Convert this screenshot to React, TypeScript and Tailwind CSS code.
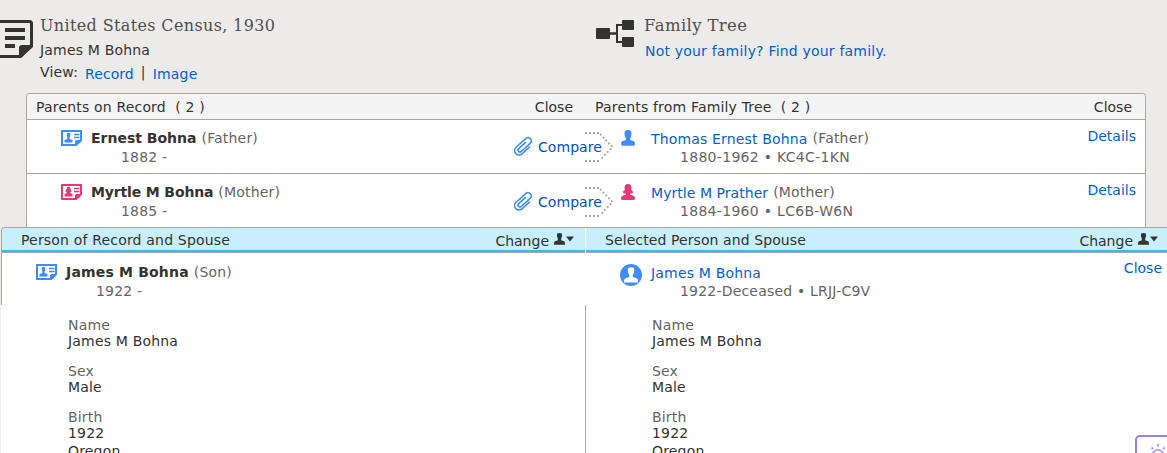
import React from "react";

function RecordIcon({ female = false }: { female?: boolean }) {
  const color = female ? "#e23a79" : "#3f8cf8";
  return (
    <svg className="block h-4 w-[21px] shrink-0" viewBox="0 0 21 16">
      <path d="M1 1H20V10L15 15H1Z" fill="#fff" stroke={color} strokeWidth="2" />
      <path d="M21 9.500V10.500L15.500 16H14V11.500Q14 10 15.500 10H20Z" fill={color} />
      <path d="M13 4.500h5.500M13 7.500h5.500" stroke={color} strokeWidth="1.300" />
      <path
        d={
          female
            ? "M6 3.200Q7.500 2.200 9 3.200L9.800 6 10.800 7.500 9.200 8.500V9L11.500 10V12.500H3.500V10L5.800 9V8.500L4.200 7.500 5.200 6Z"
            : "M5.800 3.200Q7.500 2.400 9.200 3.200V6L8.600 7.500V9L11.500 10V12.500H3.500V10L6.400 9V7.500L5.800 6Z"
        }
        fill={color}
      />
    </svg>
  );
}

function PersonIcon({ female = false }: { female?: boolean }) {
  return female ? (
    <svg className="block h-4 w-[14px] shrink-0" viewBox="0 0 14 16" fill="#e23a79">
      <path d="M4 1Q7-1 10 1L10.500 4 10.300 6 12.500 8 11 9.500H9V10.500L13 12Q14 12.500 14 14.500Q14 16 12 16H2Q0 16 0 14.500Q0 12.500 1 12L5 10.500V9.500H3L1.500 8 3.700 6 3.500 4Z" />
    </svg>
  ) : (
    <svg className="block h-4 w-[14px] shrink-0" viewBox="0 0 14 16" fill="#3f8cf8">
      <path d="M3.800 1Q7-.8 10.200 1L10.500 4 10 6.500 9.200 8.500V10L13 11.200Q14 11.700 14 14Q14 15.700 12.500 15.700H1.500Q0 15.700 0 14Q0 11.700 1 11.200L4.800 10V8.500L4 6.500 3.500 4Z" />
    </svg>
  );
}

function Avatar() {
  return (
    <svg className="block size-[22px] shrink-0" viewBox="0 0 22 22">
      <circle cx="11" cy="11" r="11" fill="#3f8cf8" />
      <path d="M8 4Q11 2.500 14 4L14.300 7 13.800 9 12.800 11V13L17 14.500Q18.300 15.500 18 18.500H4Q3.700 15.500 5 14.500L9.200 13V11L8.200 9 7.700 7Z" fill="#fff" />
    </svg>
  );
}

function Change() {
  return (
    <div className="flex pt-[5px] tracking-normal">
      <span>Change</span>
      <svg className="ml-[5px] block h-3 w-5" viewBox="0 0 20 12" fill="#333331">
        <path d="M3 .7Q5.500-.5 8 .7V3.500L7.200 5.500V7.300L10.500 8.500Q11 9 11 11.800H0Q0 9 .5 8.500L3.800 7.300V5.500L3 3.500Z" />
        <path d="M12 3.500H20L16 8.500Z" />
      </svg>
    </div>
  );
}

function Clip() {
  return (
    <svg className="block h-5 w-[21px]" viewBox="0 0 21 20" fill="none" stroke="#3f8cf8" strokeWidth="1.600" strokeLinecap="round">
      <path
        transform="translate(10.200 10.200) rotate(-42)"
        d="M4 4.800H-6A4.400 4.400 0 0 1 -6 -4H7A3.300 3.300 0 0 1 7 2.600H-5A1.900 1.900 0 0 1 -5 -1.200H4"
      />
    </svg>
  );
}

function Compare({ className }: { className: string }) {
  return (
    <div className={"absolute right-[-29px] flex w-[101px] tracking-[0.06px] text-[#0050c8] " + className}>
      <div className="mt-[6px]">
        <Clip />
      </div>
      <span className="relative z-10 ml-1 mt-[9px]">Compare</span>
      <svg className="absolute right-0 top-[2px] h-[30px] w-[30px]" viewBox="0 0 30 30" fill="none" stroke="#aaa69e" strokeWidth="1.800" strokeDasharray="2 2">
        <path d="M1 1H15" />
        <path d="M1 29H15" />
        <path d="M16 2L28.500 15L16 28" />
      </svg>
    </div>
  );
}

interface ParentProps {
  name: string;
  nameClass: string;
  role: string;
  year: string;
  treeName: string;
  treeNameClass: string;
  treeLife: string;
  compareClass: string;
  female?: boolean;
}

function ParentRow({ name, nameClass, role, year, treeName, treeNameClass, treeLife, compareClass, female }: ParentProps) {
  return (
    <div className="flex h-[54px] border-b border-[#aaa69e]">
      <div className="relative flex w-[558px] pl-[34px] pt-[10px]">
        <RecordIcon female={female} />
        <div className="ml-[9px]">
          <div className="flex">
            <b className={nameClass}>{name}</b>
            <span className="ml-[5px] text-[#656462]">({role})</span>
          </div>
          <div className="ml-[30px] mt-[3px] text-[#656462]">{year}</div>
        </div>
        <Compare className={compareClass} />
      </div>
      <div className="flex flex-1 pl-9 pr-[9px] pt-[10px]">
        <PersonIcon female={female} />
        <div className="ml-4 pt-px">
          <div className="flex">
            <span className={"text-[#005fd6] " + treeNameClass}>{treeName}</span>
            <span className="-mt-px ml-[5px] text-[#656462]">({role})</span>
          </div>
          <div className="ml-[29px] mt-[2px] tracking-[0.3px] text-[#656462]">{treeLife}</div>
        </div>
        <a className="-mt-[2px] ml-auto tracking-normal text-[#005fd6]">Details</a>
      </div>
    </div>
  );
}

function Facts() {
  const facts = [
    { label: "Name", lines: ["James M Bohna"] },
    { label: "Sex", lines: ["Male"] },
    { label: "Birth", lines: ["1922", "Oregon"] },
  ];
  return (
    <div className="flex flex-col gap-[14px] pt-3">
      {facts.map((f) => (
        <div key={f.label}>
          <div className="text-[#656462]">{f.label}</div>
          {f.lines.map((l, i) => (
            <div key={l} className={i ? "mt-[2px]" : ""}>
              {l}
            </div>
          ))}
        </div>
      ))}
    </div>
  );
}

export default function App() {
  return (
    <div className="relative flex h-[453px] w-[1167px] flex-col overflow-hidden whitespace-nowrap bg-[#ecebe9] font-['DejaVu_Sans',sans-serif] text-[14px] leading-[16px] tracking-[0.18px] text-[#333331]">
      <header className="flex h-[93px] shrink-0">
        <div className="flex w-[596px] pt-[15px]">
          <svg className="mt-[5px] block h-[38px] w-[33px]" viewBox="0 0 33 38" fill="#333331">
            <path d="M-4 1.500H29.500Q31.500 1.500 31.500 3.500V25L20.500 36.500H-4" fill="none" stroke="#333331" strokeWidth="3" />
            <path d="M19 37V28Q19 25 22 25H33V27L22 37ZM5 8H25V12H5ZM5 16H25V20H5ZM5 24H15V28H5Z" />
          </svg>
          <div className="ml-[7px]">
            <h1 className="h-[22px] font-['DejaVu_Serif',serif] text-[16px] leading-[22px] tracking-[0.36px] text-[#514f4b]">United States Census, 1930</h1>
            <div className="mt-[5px]">James M Bohna</div>
            <div className="mt-[6px] flex">
              <span>View:</span>
              <a className="ml-[7px] mt-[2px] tracking-[0.06px] text-[#005fd6]">Record</a>
              <span className="ml-[7px]">|</span>
              <a className="ml-[7px] mt-[2px] text-[#005fd6]">Image</a>
            </div>
          </div>
        </div>
        <div className="flex pt-[15px]">
          <svg className="mt-[5px] block h-[28px] w-[38px]" viewBox="0 0 38 28" fill="#333331">
            <rect y="8" width="14" height="11" rx="1" />
            <rect x="26" width="12" height="10" rx="1" />
            <rect x="26" y="17" width="12" height="10" rx="1" />
            <path d="M13 13.500H21" fill="none" stroke="#333331" strokeWidth="2.500" />
            <path d="M26 5H21V22H26" fill="none" stroke="#333331" strokeWidth="2" />
          </svg>
          <div className="ml-[10px]">
            <h1 className="h-[22px] font-['DejaVu_Serif',serif] text-[16.500px] leading-[22px] tracking-[0.36px] text-[#514f4b]">Family Tree</h1>
            <a className="ml-px mt-[6px] block tracking-[0.2px] text-[#005fd6]">Not your family? Find your family.</a>
          </div>
        </div>
      </header>

      <section className="ml-[26px] h-[134px] w-[1120px] shrink-0 overflow-hidden rounded-t-[4px] border-x border-t border-[#aaa69e] bg-white">
        <div className="flex h-[26px] border-b border-[#aaa69e] bg-[#f4f4f4] pt-[5px]">
          <div className="flex w-[558px] justify-between pl-[9px] pr-3">
            <span className="whitespace-pre">Parents on Record  ( 2 )</span>
            <span className="tracking-normal">Close</span>
          </div>
          <div className="flex flex-1 justify-between pl-[10px] pr-[13px]">
            <span className="whitespace-pre">Parents from Family Tree  ( 2 )</span>
            <span className="tracking-normal">Close</span>
          </div>
        </div>
        <ParentRow
          name="Ernest Bohna"
          nameClass="tracking-normal"
          role="Father"
          year="1882 -"
          treeName="Thomas Ernest Bohna"
          treeNameClass="tracking-[0.16px]"
          treeLife="1880-1962 • KC4C-1KN"
          compareClass="top-[10px]"
        />
        <ParentRow
          name="Myrtle M Bohna"
          nameClass="tracking-[-0.14px]"
          role="Mother"
          year="1885 -"
          treeName="Myrtle M Prather"
          treeNameClass="tracking-[0.05px]"
          treeLife="1884-1960 • LC6B-W6N"
          compareClass="top-[11px]"
          female
        />
      </section>

      <section className="flex h-[78px] shrink-0 pl-px">
        <div className="w-[584px] rounded-tl-[4px] border-l border-t border-[#aaa69e] bg-white">
          <div className="flex h-[25px] justify-between rounded-tl-[3px] border-b border-[#aaa69e] bg-[#c9effd] pl-[19px] pr-[11px] shadow-[inset_0_-2px_0_#2bc3ee]">
            <span className="pt-1">Person of Record and Spouse</span>
            <Change />
          </div>
          <div className="flex pl-[34px] pt-[11px]">
            <RecordIcon />
            <div className="ml-[9px]">
              <div className="flex">
                <b>James M Bohna</b>
                <span className="ml-[5px] text-[#656462]">(Son)</span>
              </div>
              <div className="ml-[30px] mt-[3px] text-[#656462]">1922 -</div>
            </div>
          </div>
        </div>
        <div className="flex-1 border-t border-[#aaa69e] bg-white">
          <div className="ml-px flex h-[25px] justify-between border-b border-[#aaa69e] bg-[#c9effd] pl-[19px] pr-[9px] shadow-[inset_0_-2px_0_#2bc3ee]">
            <span className="pt-1 tracking-[0.09px]">Selected Person and Spouse</span>
            <Change />
          </div>
          <div className="flex pl-[35px] pr-[5px] pt-[11px]">
            <Avatar />
            <div className="ml-[9px] pt-px">
              <div className="text-[#005fd6]">James M Bohna</div>
              <div className="ml-[29px] mt-[2px] tracking-[0.2px] text-[#656462]">1922-Deceased • LRJJ-C9V</div>
            </div>
            <a className="-mt-1 ml-auto tracking-normal text-[#005fd6]">Close</a>
          </div>
        </div>
      </section>

      <section className="flex flex-1 overflow-hidden bg-white">
        <div className="w-[586px] border-l border-r border-l-[#f0f0f0] border-r-[#aaaaaa] pl-[67px]">
          <Facts />
        </div>
        <div className="pl-[66px]">
          <Facts />
        </div>
      </section>

      <div className="absolute left-[1135px] top-[435px] h-[40px] w-[50px] rounded-[5px] border-2 border-[#9a80f6] bg-white">
        <svg className="absolute left-[13px] top-[7px] h-5 w-5" viewBox="0 0 20 20" fill="none" stroke="#a797f2" strokeWidth="1.600">
          <path d="M2 10Q8 1.500 14 10" />
          <path d="M8 0V2.500M1.500 3.500L3 5M14.500 3.500L13 5" strokeWidth="2" />
        </svg>
      </div>
    </div>
  );
}
